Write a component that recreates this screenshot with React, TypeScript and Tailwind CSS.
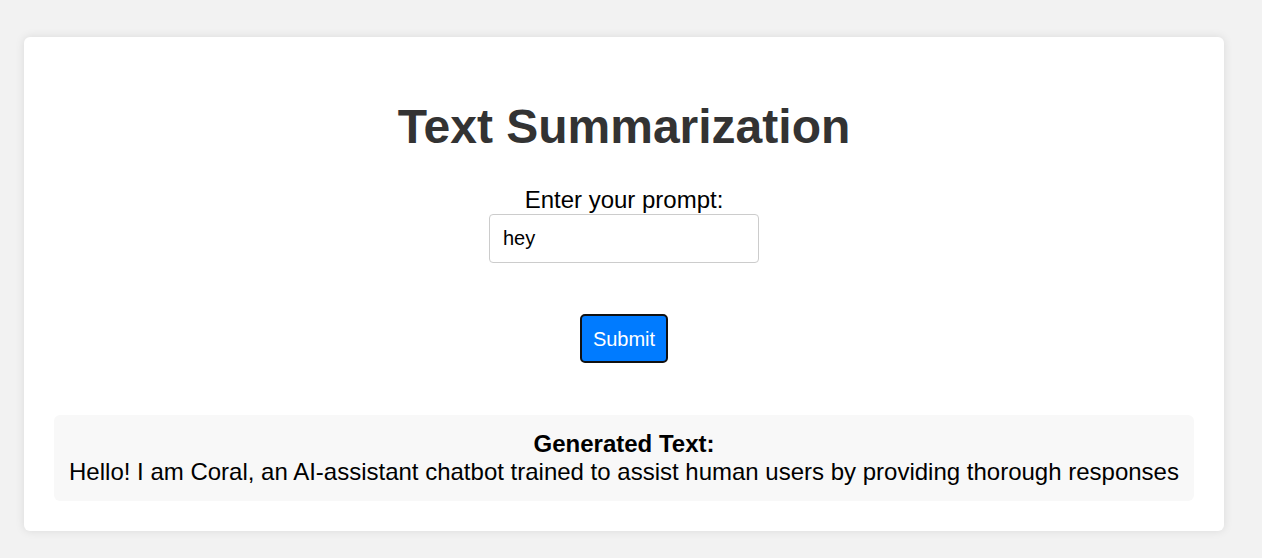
import React, { useState } from 'react';

const App: React.FC = () => {
  const [prompt, setPrompt] = useState('hey');
  const generated =
    'Hello! I am Coral, an AI-assistant chatbot trained to assist human users by providing thorough responses';

  return (
    <div
      className="min-h-screen bg-[#f2f2f2] pl-[24px] pt-[37px] pb-[27px]"
      style={{ fontFamily: '"Liberation Sans", Arial, sans-serif' }}
    >
      <div className="w-[1200px] rounded-md bg-white p-[30px] shadow-[0_0_10px_rgba(0,0,0,0.1)]">
        {/* Heading */}
        <h1 className="mt-[32px] mb-[32px] text-center text-[48px] leading-[55px] font-bold text-[#333]">
          Text Summarization
        </h1>

        {/* Prompt form */}
        <form
          className="flex flex-col items-center"
          onSubmit={e => e.preventDefault()}
        >
          <label htmlFor="prompt" className="text-[24px] leading-[28px] text-black">
            Enter your prompt:
          </label>
          <input
            id="prompt"
            type="text"
            value={prompt}
            onChange={e => setPrompt(e.target.value)}
            className="w-[270px] h-[49px] rounded border border-[#ccc] px-[13px] text-[20px] text-black outline-none"
          />
          <button
            type="submit"
            className="mt-[51px] h-[49px] w-[88px] rounded-[5px] border-2 border-[#111] bg-[#007bff] text-[20px] text-white"
          >
            Submit
          </button>
        </form>

        {/* Result */}
        <div className="mt-[52px] rounded-md bg-[#f8f8f8] py-[15px] text-center text-[24px] leading-[28px] text-black">
          <div className="font-bold">Generated Text:</div>
          <div>{generated}</div>
        </div>
      </div>
    </div>
  );
};

export default App;
